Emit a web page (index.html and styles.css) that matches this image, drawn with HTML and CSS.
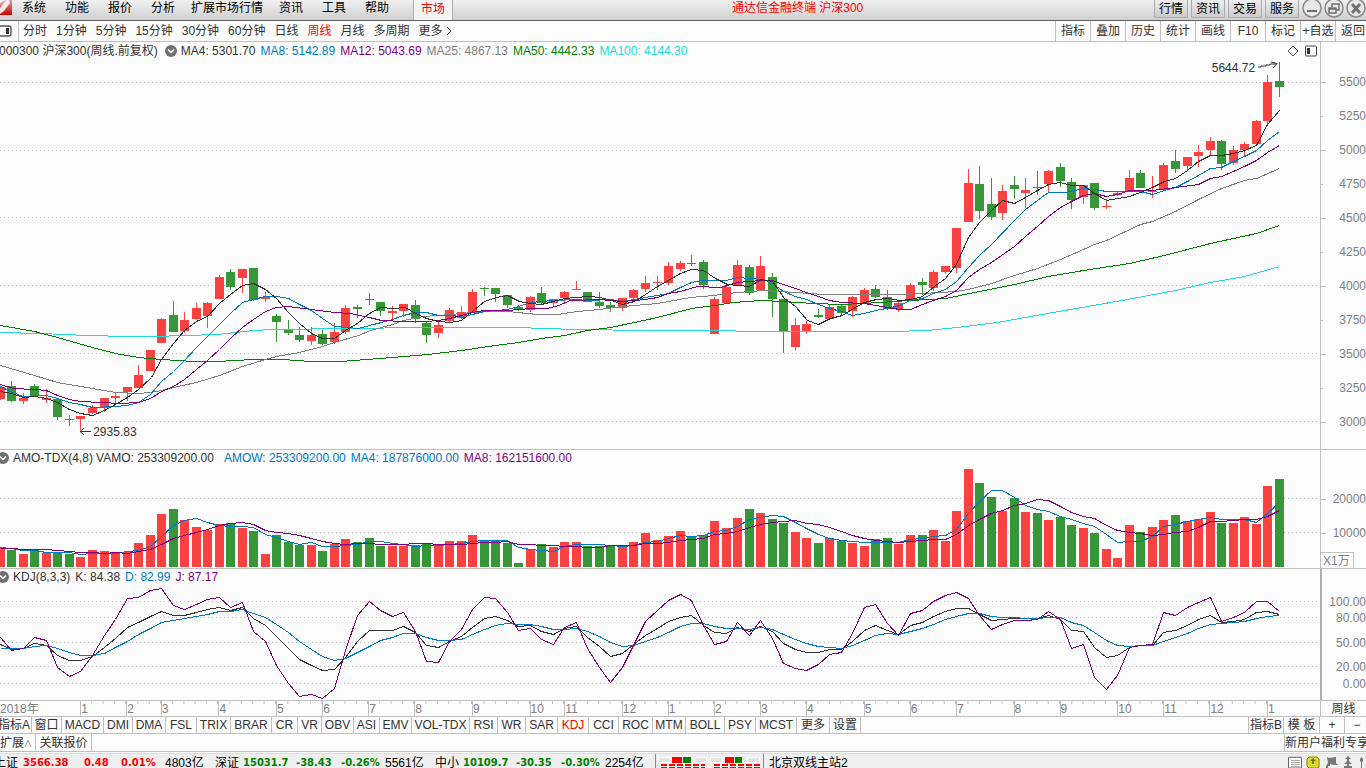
FILE: index.html
```html
<!DOCTYPE html>
<html lang="zh-CN">
<head>
<meta charset="utf-8">
<title>通达信金融终端 沪深300</title>
<link rel="stylesheet" href="styles.css">
</head>
<body>
<header class="titlebar">
  <svg class="logo" width="12" height="16" viewBox="0 0 12 16"><defs><linearGradient id="lg" x1="0" y1="0" x2="0" y2="1"><stop offset="0" stop-color="#d8a0a0"/><stop offset="1" stop-color="#d00000"/></linearGradient></defs><path d="M0 0H12V15H0Z" fill="url(#lg)"/><path d="M0 0H9L10 3L4 11L0 14V8L3 4H0Z" fill="#f6eaea"/><path d="M0 3L4 1L6 0L3 4L0 5Z" fill="#dba0a0"/></svg>
  <nav class="menu">
    <button>系统</button><button>功能</button><button>报价</button><button>分析</button><button class="long">扩展市场行情</button><button>资讯</button><button>工具</button><button>帮助</button>
  </nav>
  <button class="market">市场</button>
  <h1 class="title">通达信金融终端 沪深300</h1>
  <div class="quick"><button>行情</button><button>资讯</button><button>交易</button><button>服务</button></div>
  <div class="winbtns">
    <button aria-label="最小化"><svg width="20" height="20" viewBox="0 0 20 20"><circle cx="10" cy="8" r="9"/><path class="thick" d="M5 11H15"/></svg></button>
    <button aria-label="还原"><svg width="20" height="20" viewBox="0 0 20 20"><circle cx="10" cy="8" r="9"/><path class="mid" d="M8 7V4H15V10H12M5 8H12V13H5ZM5 9H12"/></svg></button>
    <button aria-label="关闭"><svg width="20" height="20" viewBox="0 0 20 20"><circle cx="10" cy="8" r="9"/><path class="x" d="M6 4L14 13M14 4L6 13"/></svg></button>
  </div>
</header>

<div class="toolbar">
  <button class="side" aria-label="侧栏"><svg width="13" height="12" viewBox="0 0 13 12"><rect x="-1" y="1" width="12" height="10" rx="2" fill="none" stroke="#555" stroke-width="1.4"/><path d="M6 3H9V9H6Z" fill="#333"/></svg></button>
  <nav class="periods">
    <button>分时</button><button>1分钟</button><button>5分钟</button><button>15分钟</button><button>30分钟</button><button>60分钟</button><button>日线</button><button class="on">周线</button><button>月线</button><button>多周期</button><button>更多<svg width="10" height="10" viewBox="0 0 10 10"><path d="M4 1L8 5L4 9" fill="none" stroke="#333"/></svg></button>
  </nav>
  <div class="tools"><button>指标</button><button>叠加</button><button>历史</button><button>统计</button><button>画线</button><button>F10</button><button>标记</button><button>+自选</button><button>返回</button></div>
</div>

<main class="charts">
  <section class="pane price">
    <div class="plot">
      <div class="info lead">
        <span class="name">000300 沪深300(周线.前复权)</span>
        <svg class="drop" width="12" height="12" viewBox="0 0 12 12"><circle cx="6" cy="6" r="6"/><path d="M3 4.500L6 7.500L9 4.500"/></svg>
        <span>MA4: 5301.70</span><span class="blue">MA8: 5142.89</span><span class="purple">MA12: 5043.69</span><span class="gray">MA25: 4867.13</span><span class="green">MA50: 4442.33</span><span class="cyan">MA100: 4144.30</span>
        <svg class="corner" width="32" height="12" viewBox="0 0 32 12"><path d="M8 1L13 6L8 11L3 6Z" fill="none" stroke="#555"/><rect x="20.500" y="1" width="11" height="10" rx="1" fill="none" stroke="#444"/><path d="M22 3H25V9H22Z" fill="#333"/></svg>
      </div>
      <svg class="canvas" id="price" viewBox="0 60 1320 389" preserveAspectRatio="none"></svg>
      <span class="mark high">5644.72<svg width="22" height="8" viewBox="0 0 22 8"><path d="M1 6H4V5H9V4H13V3H20M14 1L20 2.500L16 7"/></svg></span>
      <span class="mark low"><svg width="13" height="8" viewBox="0 0 13 8"><path d="M1 3.500H12M5 0L1 3.500L5 7"/></svg>2935.83</span>
    </div>
    <div class="axis">
      <span>5500</span><span class="half">5250</span><span>5000</span><span class="half">4750</span><span>4500</span><span class="half">4250</span><span>4000</span><span class="half">3750</span><span>3500</span><span class="half">3250</span><span>3000</span>
    </div>
  </section>
  <section class="pane volume">
    <div class="plot">
      <div class="info">
        <svg class="drop" width="12" height="12" viewBox="0 0 12 12"><circle cx="6" cy="6" r="6"/><path d="M3 4.500L6 7.500L9 4.500"/></svg>
        <span class="name">AMO-TDX(4,8)</span><span class="wide">VAMO: 253309200.00</span><span class="blue">AMOW: 253309200.00</span><span class="blue">MA4: 187876000.00</span><span class="purple">MA8: 162151600.00</span>
      </div>
      <svg class="canvas" id="volume" viewBox="0 466 1320 102" preserveAspectRatio="none"></svg>
    </div>
    <div class="axis"><span>20000</span><span>10000</span><b>X1万</b></div>
  </section>
  <section class="pane kdj">
    <div class="plot">
      <div class="info">
        <svg class="drop" width="12" height="12" viewBox="0 0 12 12"><circle cx="6" cy="6" r="6"/><path d="M3 4.500L6 7.500L9 4.500"/></svg>
        <span>KDJ(8,3,3)</span><span>K: 84.38</span><span class="blue">D: 82.99</span><span class="purple">J: 87.17</span>
      </div>
      <svg class="canvas" id="kdj" viewBox="0 585 1320 115" preserveAspectRatio="none"></svg>
    </div>
    <div class="axis"><span>100.00</span><span>80.00</span><span>50.00</span><span>20.00</span><span>0.00</span></div>
  </section>
</main>

<div class="dates">
  <div class="months" id="months"></div>
  <span class="period">周线</span>
</div>

<div class="row">
  <nav class="indicators">
    <button>指标A</button><button>窗口</button><button>MACD</button><button>DMI</button><button>DMA</button><button>FSL</button><button>TRIX</button><button>BRAR</button><button>CR</button><button>VR</button><button>OBV</button><button>ASI</button><button>EMV</button><button>VOL-TDX</button><button>RSI</button><button>WR</button><button>SAR</button><button class="on">KDJ</button><button>CCI</button><button>ROC</button><button>MTM</button><button>BOLL</button><button>PSY</button><button>MCST</button><button>更多</button><button>设置</button>
  </nav>
  <div class="right"><button>指标B</button><button>模 板</button><button>+</button><button>−</button></div>
</div>
<div class="row">
  <nav class="extra"><button>扩展<svg width="8" height="10" viewBox="0 0 8 10"><path d="M1 9L4 2L7 9" fill="none" stroke="#999"/></svg></button><button>关联报价</button></nav>
  <button class="promo">新用户福利专享</button>
</div>

<footer class="status">
  <div class="quotes">
    <span>上证</span><b class="up">3566.38</b><b class="up">0.48</b><b class="up">0.01%</b><span>4803亿</span>
    <span>深证</span><b class="down">15031.7</b><b class="down">-38.43</b><b class="down">-0.26%</b><span>5561亿</span>
    <span>中小</span><b class="down">10109.7</b><b class="down">-30.35</b><b class="down">-0.30%</b><span>2254亿</span>
  </div>
  <svg class="lights" width="106" height="14" viewBox="0 0 106 14"><g fill="#e4e4e4" stroke="#fff"><path d="M2.500 3.500H14.500V8.500H2.500ZM38.500 3.500H50.500V8.500H38.500ZM54.500 3.500H66.500V8.500H54.500ZM91.500 3.500H103.500V8.500H91.500Z"/></g><path d="M16 3H26V9H16ZM69 3H78V9H69Z" fill="#f00"/><path d="M27 3H35V9H27ZM79 3H86V9H79Z" fill="#008000"/><path d="M5 11H49M58 11H104M5 14H49M58 14H104" stroke="#f00" stroke-width="2" stroke-dasharray="6 2"/></svg>
  <span class="server">北京双线主站2</span>
  <svg class="tray" width="78" height="14" viewBox="0 0 78 14"><path d="M.5 3.500H13.500V14H.5Z" fill="#fff" stroke="#666"/><path d="M1 3H13M3 6.500H12M3 8.500H12M3 10.500H12M3 12.500H12" stroke="#aaa"/><path d="M21 3H29L31 5V13L29 14H21L19 12V5Z" fill="#d8d830" stroke="#888800"/><path d="M22 7L25 4L28 7H26V10H24V7Z" fill="#777700"/><path d="M39 3L41 4L48 3V9L50 11H46L42 10V12H40V14H38V12L40 9Z" fill="#777"/><path d="M60 2L63 5H61V7L64 10H61V12H64V14H56V12H59V10H56L59 7V5H57Z" fill="#777"/><path d="M72 5L73.500 3L75 5V7L74 8V14H73V8L72 7Z" fill="#777"/></svg>
</footer>
<script src="chart.js"></script>
</body>
</html>
```
FILE: styles.css
```css
* { box-sizing: border-box; }
html, body { height: 100%; }
body {
  margin: 0;
  display: flex;
  flex-direction: column;
  overflow: hidden;
  background: #fcfcfc;
  color: #333;
  font: 12px/16px "Liberation Sans", "Noto Sans CJK SC", sans-serif;
  white-space: nowrap;
}
button { margin: 0; padding: 0; border: 0; background: none; color: inherit; font: inherit; }
svg { display: block; flex: none; }
.on { color: #f00; }
.blue { color: #0078c8; }
.purple { color: #800080; }
.gray { color: #808080; }
.green { color: #008000; }
.cyan { color: #20d8d8; }

/* title bar */
.titlebar {
  flex: none;
  height: 21px;
  display: flex;
  align-items: flex-start;
  background: linear-gradient(#f0f0f0, #d0d0d0);
  border-bottom: 1px solid #606060;
  color: #000;
}
.menu { display: flex; gap: 19px; margin-left: 10px; }
.menu .long { margin: 0 -3px; }
.market { height: 20px; width: 40px; margin-left: 24px; padding-bottom: 3px; border: 1px solid #aaa; border-width: 0 1px; background: #f4f4f4; color: #f00; }
.title { flex: 1; margin: 0; padding-right: 12px; text-align: center; font-size: 12px; font-weight: normal; color: #f00; }
.quick { display: flex; gap: 3px; }
.quick button { width: 34px; height: 18px; border: 1px solid #aaa; border-top: 0; background: linear-gradient(#eee, #ccc); }
.winbtns { display: flex; gap: 2px; margin-left: 3px; }
.winbtns circle { fill: #e8e8e8; stroke: #888; stroke-width: 1.5; }
.winbtns path { fill: none; stroke: #707070; stroke-width: 2; }
.winbtns .mid { stroke-width: 1.5; }
.winbtns .x { stroke-width: 3; }

/* toolbar */
.toolbar { flex: none; height: 21px; display: flex; align-items: stretch; border-bottom: 1px solid #c0c0c0; }
.side { width: 19px; border-right: 1px solid #c0c0c0; }
.periods { display: flex; gap: 9px; margin-left: 4px; }
.periods button { display: flex; align-items: center; }
.tools { display: flex; margin-left: auto; }
.tools button { width: 35px; border-left: 1px solid #c0c0c0; }
.tools button:last-child { width: 31px; padding-left: 4px; }

/* chart panes */
.charts { flex: 1; min-height: 0; display: grid; grid-template-rows: minmax(0, 408fr) minmax(0, 119fr) minmax(0, 132fr); }
.pane { min-height: 0; display: flex; border-bottom: 1px solid #c0c0c0; }
.plot { position: relative; flex: 1; min-width: 0; display: flex; flex-direction: column; }
.canvas { flex: 1; width: 100%; min-height: 0; shape-rendering: crispEdges; }
.info { flex: none; height: 16px; display: flex; align-items: center; gap: 5px; margin-left: -3px; }
.info.lead { height: 18px; margin-left: -1px; }
.info .drop { margin-right: -1px; }
.lead .name { margin-right: 2px; }
.volume .name { margin-right: -2px; }
.wide { margin-right: 5px; }
.drop circle { fill: #707070; }
.drop path { fill: none; stroke: #fff; stroke-width: 1.5; }
.corner { margin-left: auto; margin-right: 3px; }
.mark { position: absolute; display: flex; align-items: center; }
.mark path { fill: none; stroke: #333; }
.high { right: 3.1%; top: 4.3%; gap: 2px; }
.high svg { margin-bottom: 6px; }
.low { left: 6%; bottom: 2.3%; gap: 1px; }
.axis { flex: none; width: 46px; display: flex; flex-direction: column; border-left: 1px solid #c0c0c0; color: #808080; }
.axis span { display: flex; align-items: center; justify-content: space-between; line-height: 12px; }
.axis span::before { content: ""; width: 5px; height: 1px; background: #c0c0c0; }
.axis .half::before { width: 2px; }
.price .axis { justify-content: space-between; padding: 34px 0 21px; }
.volume .axis { padding-top: 43px; }
.volume .axis span + span { margin-top: 22px; }
.volume .axis b { width: 33px; height: 16px; margin-top: auto; padding-left: 2px; border: 1px solid #c0c0c0; border-width: 1px 1px 0 0; font-weight: normal; }
.kdj .axis { padding-top: 27px; border-left-width: 2px; border-color: #b0b0b0; }
.kdj .axis span::before { background: none; }
.kdj .axis span:nth-child(2) { margin-top: 4px; }
.kdj .axis span:nth-child(3) { margin-top: 13px; }
.kdj .axis span:nth-child(4) { margin-top: 12px; }
.kdj .axis span:nth-child(5) { margin-top: 5px; }

/* date scale */
.dates { flex: none; height: 16px; display: flex; border-bottom: 1px solid #c0c0c0; }
.months { flex: 1; min-width: 0; display: grid; color: #808080; }
.months span {
  min-width: 0;
  border-left: 1px solid #c0c0c0;
  background: linear-gradient(90deg, transparent calc(100% - 1px), #c0c0c0 0) 0 0 / calc(100% / var(--weeks)) 3px repeat-x;
}
.months span:first-child { border: 0; }
.months span:first-child, .months span:last-child { background: none; }
.period { width: 46px; border-left: 1px solid #c0c0c0; text-align: center; }

/* indicator tabs */
.row { flex: none; height: 17px; display: flex; border-bottom: 1px solid #c0c0c0; }
.row + .row { height: 18px; }
.row button { border-right: 1px solid #c0c0c0; overflow: hidden; }
.indicators {
  display: grid;
  grid-template-columns: 32px 30px 42px 29px 33px 31px 34px 41px 26px 24px 32px 26px 32px 58px 28px 28px 32px 31px 30px 34px 33px 39px 31px 41px 33px 31px;
}
.indicators button { display: flex; justify-content: center; }
.indicators button:first-child { justify-content: flex-end; padding-right: 1px; }
.right { display: grid; grid-template-columns: 35px 36px 25px 21px; margin-left: auto; border-left: 1px solid #c0c0c0; }
.right button:last-child { border-right: 0; padding-left: 3px; }
.extra { display: grid; grid-template-columns: 36px 56px; }
.extra button { display: flex; align-items: center; justify-content: center; }
.extra button:first-child { justify-content: flex-start; }
.row .promo { width: 82px; margin-left: auto; border: 0; border-left: 1px solid #c0c0c0; text-align: left; }

/* status bar */
.status { flex: none; height: 15px; margin-top: 1px; display: flex; overflow: hidden; background: #efefef; border-top: 1px solid #ddd; color: #000; }
.quotes {
  width: 662px;
  margin-left: -6px;
  display: grid;
  grid-template-columns: 29px 61px 37px 44px 50px 28px 53px 45px 44px 50px 28px 53px 45px 44px 50px;
  border-right: 1px solid #888;
  line-height: 18px;
}
.quotes b { font: bold 10px/18px "DejaVu Sans", sans-serif; }
.up { color: #f00; }
.down { color: #008000; }
.server { margin-left: 1px; padding-left: 5px; border-left: 1px solid #888; line-height: 18px; }
.tray { margin-left: auto; }
```
FILE: chart.js
```js
const STEP = 11.521;
const START = 0.34;
const BASE = 567;
const RED = '#fc4141', GREEN = '#379637';

// One entry per week: colour, body top, body bottom, high, low
const candles = `
r 387 399 386 400|g 386 401 381 402|r 398 401 393 404|g 386 396 384 396|r 398 400 389 403|g 399 417 398 420|g 419 420 415 426|r 416 419 416 430|r 408 413 405 414|r 398 408 398 412
r 396 398 393 403|r 387 392 387 401|r 375 388 365 388|r 350 371 350 371|r 319 343 318 343|g 315 332 301 332|r 320 331 312 333|r 308 319 303 320|r 303 316 302 328|r 277 299 275 299
g 272 287 269 290|r 269 278 269 293|g 268 300 268 301|r 297 299 292 302|g 316 322 314 342|g 330 333 320 335|g 335 340 327 342|r 335 341 327 345|g 334 344 330 345|r 332 342 323 344
r 308 332 305 334|g 307 309 305 318|g 299 300 293 305|g 302 311 302 316|r 311 313 306 320|r 304 311 304 317|g 305 319 300 323|g 323 335 322 343|r 325 333 322 338|r 310 321 308 322
r 312 318 306 319|r 292 312 289 312|g 288 289 287 296|g 288 294 288 302|g 295 305 295 308|g 307 309 305 311|r 297 310 296 312|g 293 303 287 304|r 299 303 299 306|r 292 298 291 302
r 289 290 281 290|g 292 302 292 302|g 302 306 292 308|g 305 308 302 312|r 298 308 298 311|r 290 298 289 300|r 283 289 276 292|r 282 283 276 290|r 266 283 262 285|r 263 269 261 271
g 263 264 255 266|g 262 285 260 289|r 299 334 297 334|r 287 303 285 303|r 265 285 260 285|g 267 293 265 295|r 266 290 256 290|g 277 299 273 317|g 299 331 299 353|r 325 347 318 350
r 324 331 321 334|g 315 317 309 318|r 307 319 305 320|g 306 313 304 315|r 297 311 296 317|r 290 303 288 303|g 289 297 285 298|g 297 309 290 310|r 303 309 300 312|r 285 299 283 300
g 282 285 278 295|r 272 288 270 291|r 266 272 266 274|r 228 268 228 273|r 183 222 169 222|g 184 211 166 219|g 204 217 178 220|r 191 213 185 220|g 185 189 176 199|r 190 193 178 208
g 187 188 171 195|r 171 184 170 193|g 167 181 163 187|g 182 200 178 209|r 185 197 185 204|g 183 208 183 210|r 206 207 199 209|r 193 195 192 196|r 178 191 170 191|g 173 188 170 188
r 191 192 176 198|r 165 190 163 191|g 161 169 150 173|r 157 166 157 170|r 152 156 145 167|r 141 150 137 156|g 141 164 140 170|r 150 163 146 165|r 144 150 142 156|r 121 144 120 144
r 82 121 75 124|g 81 87 62 97`.trim().split(/[\n|]/).map(s => s.split(' ')).map(a => [a[0] === 'r' ? RED : GREEN, ...a.slice(1).map(Number)]);

const averages = {
  '#20d8d8': '0,332 40,333 87,335 127,336 153,336 217,334 253,330 273,329 350,328 420,327 523,327 537,328 583,329 640,330 690,330 780,331 890,331 927,330 957,327 997,322 1030,316 1127,299 1175,290 1210,282 1244,276 1279,266',
  '#008000': '0,325 34,331 57,337 92,347 115,353 138,357 161,359 193,361 217,361 253,359 283,359 310,361 340,361 392,357 427,354 461,350 495,345 518,342 541,338 564,335 587,330 610,327 634,322 657,317 691,308 714,305 733,302 760,300 783,301 813,303 841,304 863,303 910,300 945,298 979,291 1014,284 1048,276 1083,270 1129,263 1164,255 1210,243 1256,233 1279,225',
  '#808080': '0,365 34,375 57,382 92,388 115,392 138,393 150,392 161,390 173,387 196,382 219,375 242,366 265,359 276,356 299,352 322,346 334,342 358,335 370,330 392,324 403,320 423,316 450,314 484,311 507,311 537,314 557,314 577,311 599,309 623,306 657,303 690,297 713,295 737,292 763,290 795,292 823,294 899,294 922,293 956,291 968,289 991,283 1014,275 1037,268 1060,259 1083,249 1094,244 1106,240 1140,224 1152,221 1175,211 1198,199 1221,188 1244,180 1256,178 1279,168',
  '#0078c8': '0,386 12,392 23,396 46,395 57,398 69,402 80,404 92,407 115,406 127,405 138,402 150,394 161,381 173,371 184,360 196,347 207,336 219,324 230,313 242,302 253,299 265,296 276,296 288,298 299,304 311,310 322,318 334,326 358,328 369,325 381,322 392,319 403,315 415,312 426,312 438,315 449,315 461,316 472,314 484,311 507,309 518,306 530,302 541,301 553,300 575,299 587,300 610,299 622,301 634,299 645,297 668,293 680,287 691,282 703,280 726,280 737,277 749,278 763,279 772,283 783,291 795,296 806,299 818,304 829,308 841,311 852,315 864,313 875,310 887,308 899,305 910,300 922,298 933,293 945,289 956,281 968,267 979,255 991,244 1014,220 1025,209 1037,200 1048,192 1065,192 1083,188 1094,189 1106,191 1129,191 1140,191 1152,194 1164,190 1175,187 1187,181 1198,175 1210,168 1221,167 1233,161 1244,156 1256,150 1267,140 1279,131',
  '#800080': '0,384 13,388 34,389 46,390 57,395 69,399 80,401 100,402 120,403 138,402 150,398 161,391 173,386 184,379 196,369 207,360 219,349 230,338 242,327 253,319 265,311 276,307 288,306 311,309 334,312 350,313 369,317 381,320 403,321 426,321 438,320 449,318 461,315 472,312 484,310 507,310 530,308 547,308 558,305 570,300 599,299 622,301 634,300 645,299 657,297 668,293 680,291 697,286 720,287 737,282 749,281 760,280 772,280 783,284 795,288 806,292 818,296 829,300 841,302 864,303 875,305 887,307 899,309 910,309 922,304 933,300 945,296 956,290 968,277 979,269 991,262 1014,246 1025,236 1037,226 1048,216 1060,207 1071,201 1083,195 1094,193 1106,196 1117,194 1129,190 1152,190 1175,187 1198,184 1210,178 1221,176 1233,171 1244,166 1256,160 1267,152 1279,145',
  '#333': '0,391 11,393 23,397 35,396 46,398 57,402 69,409 80,413 92,415 104,410 115,404 127,397 138,389 151,377 161,359 173,343 184,330 196,321 207,316 219,303 230,294 242,285 253,283 265,289 276,298 288,312 299,323 311,333 322,338 334,338 345,330 357,323 369,313 380,307 392,308 405,307 415,313 426,318 438,321 450,322 461,320 473,310 484,301 496,297 507,295 519,301 530,303 541,304 553,301 564,298 576,297 588,296 600,297 611,300 622,304 634,301 645,294 657,286 668,280 680,273 691,269 703,270 715,278 727,284 738,285 749,286 761,279 772,281 784,298 795,306 807,320 818,324 830,318 842,315 853,308 864,302 876,299 888,298 899,300 911,299 922,296 934,286 945,278 956,264 968,237 979,222 991,210 1002,200 1014,203 1025,197 1037,190 1048,184 1060,182 1071,185 1083,185 1094,193 1106,200 1118,198 1129,196 1140,192 1152,187 1164,181 1175,178 1187,170 1198,161 1210,155 1221,155 1233,153 1244,150 1256,145 1267,124 1279,110'
};

const volumeTops = [547,550,554,549,553,552,554,557,550,551,552,552,543,535,514,509,520,527,530,524,523,528,531,554,535,542,545,545,551,544,539,542,538,546,546,546,545,543,545,541,541,535,541,541,543,563,549,544,547,542,542,546,546,546,547,542,533,540,536,531,536,535,521,528,518,509,513,519,523,532,538,543,538,541,543,546,539,538,544,535,535,530,541,511,469,483,497,511,498,512,513,520,517,525,528,533,549,558,525,532,527,520,515,521,519,512,523,523,517,524,486,479];

const kdj = {
  '#333': [644,649,648,643,645,655,660,660,656,647,638,627,622,616,611,615,615,612,609,607,610,607,618,625,636,648,659,665,670,669,657,641,630,630,630,626,632,645,647,641,636,627,618,616,620,626,625,631,634,628,626,637,646,656,653,644,635,628,621,617,615,625,632,633,627,631,626,631,643,649,652,652,649,649,641,630,625,630,634,625,622,616,611,608,608,614,620,619,618,618,618,615,619,630,631,647,657,655,647,645,645,632,630,625,619,615,622,621,619,612,611,614],
  '#0078c8': [648,648,648,646,645,648,652,655,655,653,647,641,634,628,622,620,618,616,614,611,611,609,613,617,624,632,641,649,656,660,658,652,646,640,637,633,633,637,640,640,639,634,629,625,623,624,624,626,629,629,628,631,636,642,646,645,641,637,632,626,623,623,626,628,628,629,627,629,634,639,643,646,647,648,645,640,635,633,634,631,628,624,619,616,613,613,616,617,617,618,618,617,617,622,625,632,640,645,646,645,645,641,637,633,628,624,623,622,621,618,616,615],
  '#800080': [637,650,648,637,640,667,676,671,655,635,619,598,597,590,588,605,609,604,599,597,607,602,631,641,665,683,696,694,698,688,650,615,601,610,616,612,631,661,662,641,629,609,597,598,612,630,628,639,644,627,622,648,667,682,667,645,621,610,600,594,600,625,644,641,622,635,620,638,663,668,670,664,654,652,633,607,604,623,635,613,610,601,595,592,598,615,629,624,620,620,619,611,619,648,644,677,689,675,647,645,644,612,615,607,602,597,621,617,612,601,601,611]
};

const months = [['2018年', 6.96], [1, 4], [2, 3], [3, 5], [4, 5], [5, 4], [6, 4], [7, 4], [8, 5], [9, 5], [10, 3], [11, 5], [12, 4], [1, 4], [2, 4], [3, 4], [4, 5], [5, 4], [6, 4], [7, 5], [8, 4], [9, 5], [10, 4], [11, 4], [12, 5], [1, 4.6]];

const at = i => Math.floor(STEP * i + START);
const rect = (x, y, w, h, c) => `<rect x="${x}" y="${y}" width="${w}" height="${h}" fill="${c}"/>`;
const grid = ys => ys.map(y => `<path d="M0 ${y + 0.5}H1320" stroke="#b8b8b8" stroke-dasharray="1 3"/>`).join('');
const line = (pts, c) => `<polyline fill="none" stroke="${c}" points="${pts.map(([x, y]) => `${x + 0.5},${y + 0.5}`).join(' ')}"/>`;
const series = (ys, c) => line(ys.map((y, i) => [at(i), y]), c);
const put = (id, html) => { document.getElementById(id).innerHTML = html; };

put('price', grid([82, 150, 217, 285, 353, 421]) +
  candles.map(([c, top, bottom, high, low], i) =>
    rect(at(i), high, 1, low - high, c) + rect(at(i) - 4, top, 9, bottom - top, c)).join('') +
  Object.entries(averages).map(([c, s]) => line(s.split(' ').map(p => p.split(',').map(Number)), c)).join(''));

const heights = [20, 18, 18, 18, 20, 21, 20, ...volumeTops.map(y => BASE - y)];
const mean = n => volumeTops.map((_, i) => BASE - heights.slice(i + 8 - n, i + 8).reduce((a, b) => a + b) / n);
put('volume', grid([498, 532]) +
  volumeTops.map((y, i) => rect(at(i) - 4, y, 9, BASE - y, candles[i][0])).join('') +
  series(mean(4).map(Math.round), '#0078c8') + series(mean(8).map(Math.round), '#800080'));

put('kdj', grid([601, 617, 642, 666, 683]) + Object.entries(kdj).map(([c, ys]) => series(ys, c)).join(''));

put('months', months.map(([m, n]) => `<span style="--weeks:${n}">${m}</span>`).join(''));
document.getElementById('months').style.gridTemplateColumns = months.map(([, n]) => `minmax(0, ${n}fr)`).join(' ');
```
